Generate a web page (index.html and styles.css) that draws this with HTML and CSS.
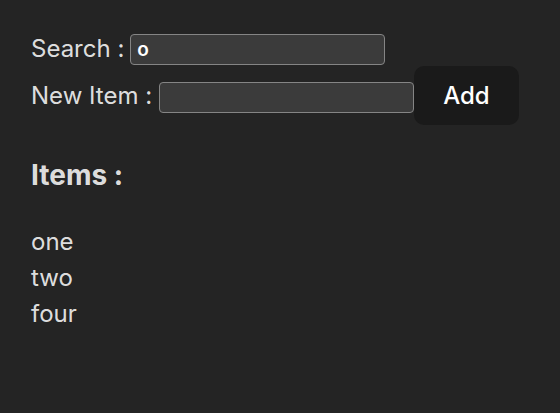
FILE: index.html
```html
<!DOCTYPE html>
<html lang="en">
<head>
<meta charset="utf-8">
<title>Items</title>
<link rel="stylesheet" href="styles.css">
</head>
<body>
<div class="app">
  <div class="row row-search">
    <label class="label" for="search">Search :</label>
    <input class="field" id="search" type="text" value="o">
  </div>
  <div class="row row-new">
    <label class="label" for="newitem">New Item :</label>
    <input class="field" id="newitem" type="text" value="">
    <button class="btn" type="button">Add</button>
  </div>
  <h3 class="title">Items :</h3>
  <div class="list">
    <div class="item">one</div>
    <div class="item">two</div>
    <div class="item">four</div>
  </div>
</div>
</body>
</html>
```

FILE: styles.css
```css
html, body {
  margin: 0;
  padding: 0;
  background: #242424;
}
body {
  font-family: Inter, "Noto Sans", sans-serif;
  font-size: 24px;
  line-height: 1.5;
  color: rgba(255, 255, 255, 0.87);
}
.app {
  padding: 32px 31px;
}
.row {
  display: flex;
  align-items: center;
  gap: 6px;
}
.row-search {
  height: 34px;
}
.row-new {
  height: 59px;
  gap: 7px;
}
.label {
  white-space: nowrap;
}
.field {
  box-sizing: border-box;
  width: 255px;
  height: 31px;
  margin: 0;
  padding: 0 6px;
  background: #3b3b3b;
  border: 1px solid #858585;
  border-radius: 4px;
  color: #ffffff;
  font-family: Inter, "Noto Sans", sans-serif;
  font-size: 19px;
  font-weight: 600;
  outline: none;
}
.row-new .field {
  margin: 4px -7px 0 0;
}
.btn {
  box-sizing: border-box;
  height: 59px;
  padding: 0 28px;
  margin: 0;
  background: #1a1a1a;
  border: 1px solid transparent;
  border-radius: 10px;
  color: #ffffff;
  font-family: Inter, "Noto Sans", sans-serif;
  font-size: 24px;
  font-weight: 500;
  line-height: normal;
  cursor: pointer;
}
.title {
  margin: 29px 0 28px;
  font-size: 28px;
  font-weight: 700;
  line-height: 42px;
}
.list {
  margin: 0;
}
.item {
  line-height: 36px;
}
```
